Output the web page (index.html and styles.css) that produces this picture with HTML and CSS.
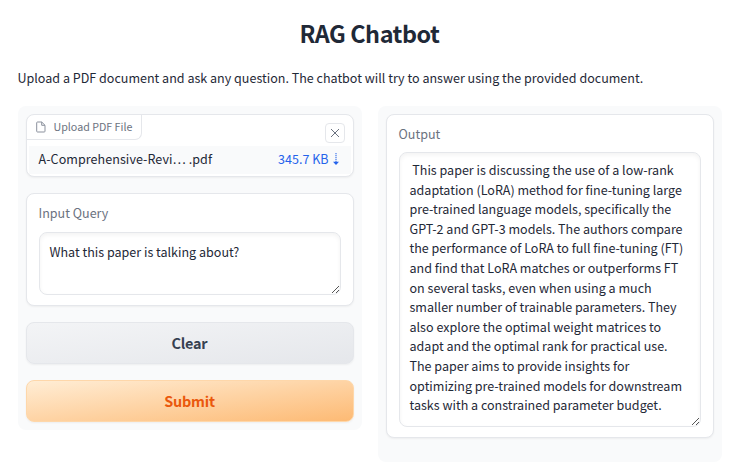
FILE: index.html
```html
<!DOCTYPE html>
<html lang="en">
<head>
<meta charset="utf-8">
<title>RAG Chatbot</title>
<link rel="stylesheet" href="styles.css">
</head>
<body>
<main>
  <h1>RAG Chatbot</h1>
  <p class="intro">Upload a PDF document and ask any question. The chatbot will try to answer using the provided document.</p>
  <div class="columns">
    <section class="panel">
      <div class="block upload">
        <div class="upload-top">
          <div class="tag">
            <svg width="10" height="12" viewBox="0 0 10 12" fill="none" stroke="#8b919d" stroke-width="1" stroke-linejoin="round"><path d="M1.5 1h4.2L9 4.3v5.9q0 .8-.8.8H1.5q-.8 0-.8-.8V1.8Q.7 1 1.5 1zM5.7 1v3.3H9"/></svg>
            <span>Upload PDF File</span>
          </div>
          <button class="close" aria-label="Remove file"><svg width="10" height="10" viewBox="0 0 10 10" fill="none" stroke="#6b7280" stroke-width="1"><path d="M1 1l8 8M9 1L1 9"/></svg></button>
        </div>
        <div class="file">
          <span class="name">A-Comprehensive-Revi… .pdf</span>
          <a class="size"><span>345.7 KB</span><svg width="8" height="13" viewBox="0 0 8 13" fill="none" stroke="#2563eb"><path d="M4 0v9" stroke-width="1.3" stroke-dasharray="1.3 .7" stroke-opacity=".8"/><path d="M1 8.8h6L4 12z" fill="#2563eb" stroke="none"/></svg></a>
        </div>
      </div>
      <div class="block field">
        <label>Input Query</label>
        <div class="box query">What this paper is talking about?<svg class="grip" width="9" height="9" viewBox="0 0 9 9" stroke="#555" stroke-width="1"><path d="M1 8L8 1M5 8l3-3"/></svg></div>
      </div>
      <button class="btn clear">Clear</button>
      <button class="btn submit">Submit</button>
    </section>
    <section class="panel output">
      <div class="block field">
        <label>Output</label>
        <div class="box answer"> This paper is discussing the use of a low-rank
adaptation (LoRA) method for fine-tuning large
pre-trained language models, specifically the
GPT-2 and GPT-3 models. The authors compare
the performance of LoRA to full fine-tuning (FT)
and find that LoRA matches or outperforms FT
on several tasks, even when using a much
smaller number of trainable parameters. They
also explore the optimal weight matrices to
adapt and the optimal rank for practical use.
The paper aims to provide insights for
optimizing pre-trained models for downstream
tasks with a constrained parameter budget.<svg class="grip" width="9" height="9" viewBox="0 0 9 9" stroke="#555" stroke-width="1"><path d="M1 8L8 1M5 8l3-3"/></svg></div>
      </div>
    </section>
  </div>
</main>
</body>
</html>
```
FILE: styles.css
```css
* { box-sizing: border-box; }
body {
  margin: 0;
  background: #fff;
  color: #1f2937;
  font: 12.54px/19.6px "Noto Sans CJK SC", "Open Sans", sans-serif;
}
main { padding: 15px 24.5px 0 17.5px; }
h1 {
  margin: 0;
  height: 36px;
  font-size: 23.4px;
  line-height: 36px;
  font-weight: 700;
  letter-spacing: -.45px;
  text-align: center;
}
.intro { margin: 17px 0 18px; height: 20px; line-height: 20px; white-space: nowrap; }
.columns {
  display: grid;
  grid-template-columns: repeat(2, minmax(0, 1fr));
  gap: 16px;
  align-items: start;
}
.panel {
  display: flex;
  flex-direction: column;
  gap: 16px;
  padding: 8px;
  background: #f9fafb;
  border-radius: 8px;
}
.output { height: 356px; }
.block {
  background: #fff;
  border: 1px solid #e5e7eb;
  border-radius: 8px;
  box-shadow: 0 1px 2px rgba(0, 0, 0, .05);
}
.upload { height: 63px; overflow: hidden; }
.upload-top { display: flex; justify-content: space-between; height: 31px; }
.tag {
  display: flex;
  align-items: center;
  gap: 8px;
  width: 115px;
  height: 25px;
  padding-left: 9px;
  border: solid #e5e7eb;
  border-width: 0 1px 1px 0;
  border-radius: 0 0 7px 0;
  color: #6b7280;
  font-size: 10.7px;
  white-space: nowrap;
}
.close {
  display: grid;
  place-items: center;
  width: 20px;
  height: 20px;
  margin: 8px 8px 0 0;
  padding: 0;
  background: #fff;
  border: 1px solid #e5e7eb;
  border-radius: 4px;
}
.file {
  display: flex;
  justify-content: space-between;
  align-items: center;
  height: 28px;
  margin: 0 2px;
  padding: 0 11px 2px 10px;
  background: #f9fafb;
}
.name { letter-spacing: .06px; }
.size { display: flex; align-items: center; gap: 3px; color: #2563eb; }
.field { padding: 9px 12px 10px; }
label { display: block; height: 20px; margin-bottom: 9px; line-height: 20px; color: #6b7280; }
.box {
  position: relative;
  padding: 7px 10px;
  border: 1px solid #e5e7eb;
  border-radius: 8px;
  box-shadow: inset 0 2px 4px rgba(0, 0, 0, .05);
  white-space: pre;
}
.query { height: 63px; padding-top: 9px; }
.output label { margin-bottom: 8px; }
.answer { height: 275px; }
.grip { position: absolute; right: 0; bottom: 0; }
.btn {
  height: 42px;
  padding: 0;
  border: 1px solid #e5e7eb;
  border-radius: 8px;
  box-shadow: 0 1px 2px rgba(0, 0, 0, .05);
  font: 700 14.4px/24px "Noto Sans CJK SC", "Open Sans", sans-serif;
  letter-spacing: -.2px;
}
.clear { background: linear-gradient(to bottom right, #f3f4f6, #e5e7eb); color: #374151; }
.submit { background: linear-gradient(to bottom right, #ffedd5, #fdba74); border-color: #fed7aa; color: #ea580c; }
```
